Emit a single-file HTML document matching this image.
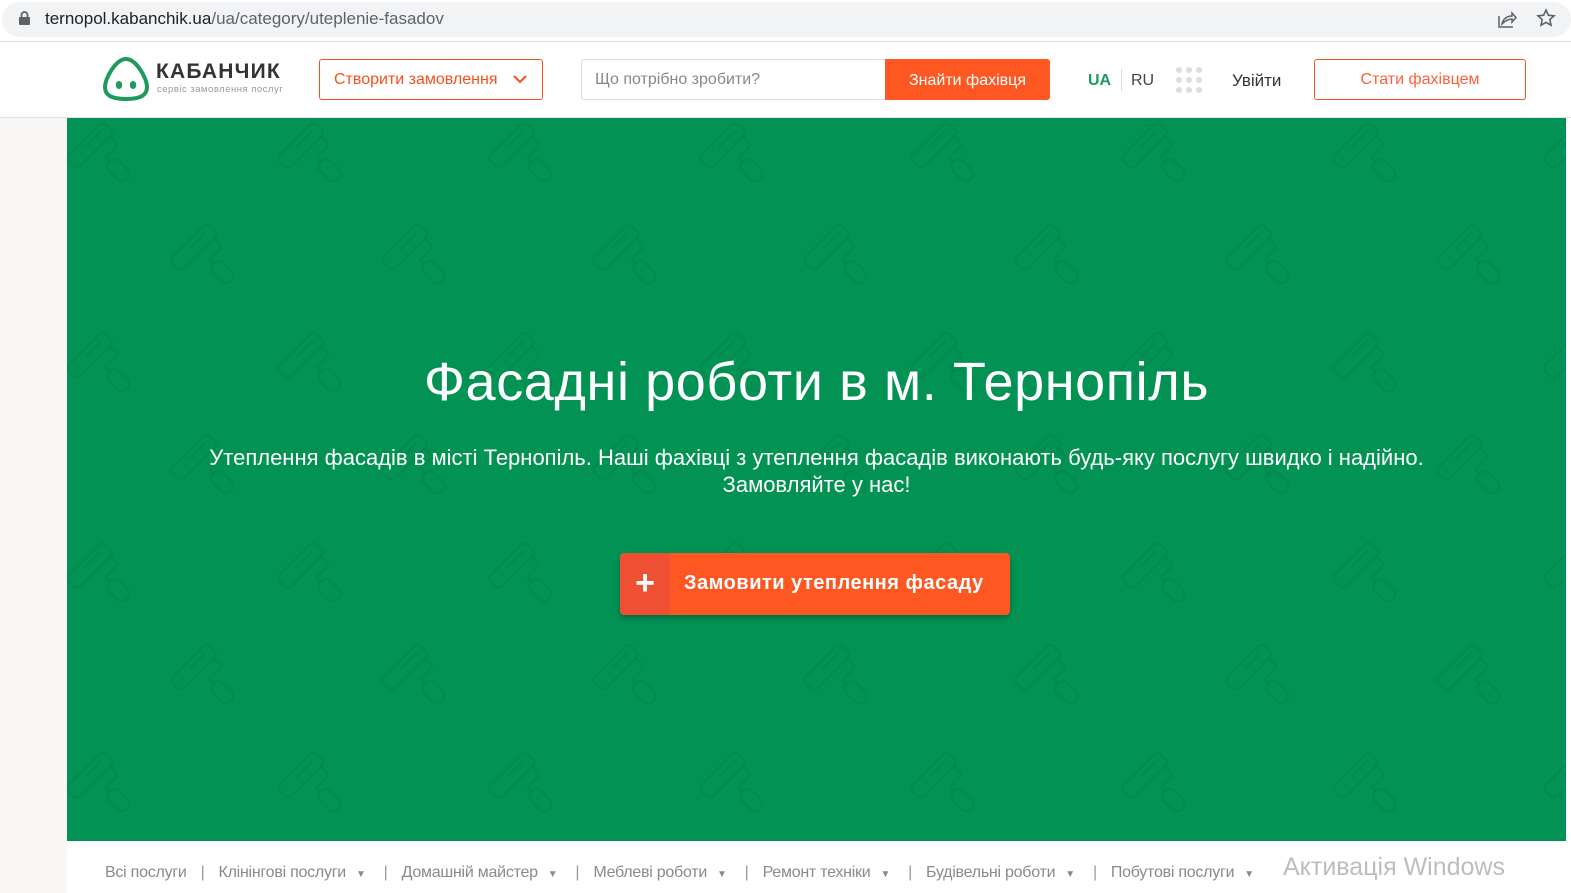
<!DOCTYPE html>
<html><head><meta charset="utf-8">
<style>
*{margin:0;padding:0;box-sizing:border-box}
body{width:1571px;height:893px;overflow:hidden;background:#fff;font-family:"Liberation Sans","DejaVu Sans",sans-serif;position:relative}
.abs{position:absolute}
#bar{left:0;top:0;width:1571px;height:41px;background:#fff}
#pill{left:2px;top:2px;width:1569px;height:35px;background:#f1f3f4;border-radius:18px}
#url{left:45px;top:9px;font-size:17px;color:#202124}
#url span{color:#5f6368}
#hdr{left:0;top:41px;width:1571px;height:77px;background:#fff;border-top:1px solid #dadce0;border-bottom:1px solid #e2e2e2}
.btnO{border:1px solid #f4511e;border-radius:3px;color:#f4511e;font-size:16px;display:flex;align-items:center}
#green{left:67px;top:118px;width:1499px;height:723px;background:#029254;overflow:hidden}
#left{left:0;top:118px;width:67px;height:775px;background:#f8f7f6}
h1{position:absolute;left:0;width:100%;top:233px;text-align:center;color:#fff;font-weight:normal;font-size:54px;letter-spacing:0.6px}
.sub{position:absolute;left:0;width:100%;text-align:center;color:#fff;font-size:22px;line-height:27px;white-space:nowrap}
#cta{left:620px;top:553px;width:390px;height:62px;background:#fe5722;border-radius:4px;box-shadow:0 3px 6px rgba(0,0,0,.25);overflow:hidden}
#nav{left:105px;top:864px;font-size:16px;color:#8a8a8a;white-space:nowrap;letter-spacing:-0.25px}
#nav i{font-style:normal;font-size:10px;margin:0 4px 0 10px}
#nav b{font-weight:normal;margin:0 14px;color:#999}
</style></head><body>
<div class="abs" id="bar"></div>
<div class="abs" id="pill"></div>
<svg class="abs" style="left:18px;top:11px" width="13" height="15" viewBox="0 0 13 15"><rect x="1" y="6" width="11" height="8" rx="1" fill="#5f6368"/><path d="M3.5 6V4a3 3 0 0 1 6 0v2" stroke="#5f6368" stroke-width="1.8" fill="none"/></svg>
<div class="abs" id="url">ternopol.kabanchik.ua<span>/ua/category/uteplenie-fasadov</span></div>
<svg class="abs" style="left:1497px;top:9px" width="20" height="20" viewBox="0 0 20 20" fill="none" stroke="#5f6368" stroke-width="1.5"><path d="M2 7v11h14"/><path d="M5 15c1-5 5-8 10-8V4l4 4.5L15 13v-3c-4 0-7 2-10 5z"/></svg>
<svg class="abs" style="left:1536px;top:8px" width="20" height="20" viewBox="0 0 20 20" fill="none" stroke="#5f6368" stroke-width="1.6"><path d="M10 2l2.4 5.2 5.6.6-4.2 3.8 1.2 5.6L10 14.4 5 17.2l1.2-5.6L2 7.8l5.6-.6z"/></svg>

<div class="abs" id="hdr"></div>
<svg class="abs" style="left:102px;top:56px" width="48" height="46" viewBox="0 0 48 46"><path d="M24 3C14 3 3 22 3 31c0 8 6 12 21 12s21-4 21-12C45 22 34 3 24 3z" fill="none" stroke="#1d9a5c" stroke-width="4"/><ellipse cx="17" cy="29" rx="3.2" ry="4" fill="#1d9a5c"/><ellipse cx="31" cy="29" rx="3.2" ry="4" fill="#1d9a5c"/></svg>
<div class="abs" style="left:156px;top:60px;font-size:21px;font-weight:bold;color:#333;letter-spacing:1.2px">КАБАНЧИК</div>
<div class="abs" style="left:157px;top:84px;font-size:9.5px;color:#999;letter-spacing:0.5px">сервіс замовлення послуг</div>
<div class="abs btnO" style="left:319px;top:59px;width:224px;height:41px;padding-left:14px">Створити замовлення
<svg style="margin-left:16px" width="14" height="9" viewBox="0 0 14 9"><path d="M1 1l6 6 6-6" stroke="#f4511e" stroke-width="2" fill="none"/></svg></div>
<div class="abs" style="left:581px;top:59px;width:305px;height:41px;border:1px solid #ddd;border-radius:3px 0 0 3px;color:#888;font-size:16px;padding:11px 0 0 13px">Що потрібно зробити?</div>
<div class="abs" style="left:885px;top:59px;width:165px;height:41px;background:#fe5722;border-radius:0 3px 3px 0;color:#fff;font-size:16px;text-align:center;line-height:43px">Знайти фахівця</div>
<div class="abs" style="left:1088px;top:72px;font-size:16px;font-weight:bold;color:#1d9a5c">UA</div>
<div class="abs" style="left:1121px;top:69px;width:1px;height:22px;background:#ddd"></div>
<div class="abs" style="left:1131px;top:72px;font-size:16px;color:#444">RU</div>
<svg class="abs" style="left:1175px;top:66px" width="28" height="28" viewBox="0 0 28 28" fill="#ddd"><circle cx="4" cy="4" r="3"/><circle cx="14" cy="4" r="3"/><circle cx="24" cy="4" r="3"/><circle cx="4" cy="14" r="3"/><circle cx="14" cy="14" r="3"/><circle cx="24" cy="14" r="3"/><circle cx="4" cy="24" r="3"/><circle cx="14" cy="24" r="3"/><circle cx="24" cy="24" r="3"/></svg>
<div class="abs" style="left:1232px;top:71px;font-size:17px;color:#333">Увійти</div>
<div class="abs btnO" style="left:1314px;top:59px;width:212px;height:41px;justify-content:center;color:#fe5f3a">Стати фахівцем</div>

<div class="abs" id="left"></div>
<div class="abs" id="green">
<svg width="1499" height="723" style="position:absolute;left:0;top:0">
<defs>
<g id="r" fill="none" stroke="rgba(0,40,20,0.08)" stroke-width="2.6" stroke-linecap="round" stroke-linejoin="round">
<g transform="rotate(45) scale(0.9)">
<rect x="-9" y="-30" width="18" height="58" rx="5"/>
<path d="M-2 -20V2"/>
<path d="M9 -24H18Q22 -24 22 -20V-4H28"/>
<rect x="28" y="-12" width="28" height="16" rx="8"/>
</g></g>
<pattern id="p" width="211" height="210" patternUnits="userSpaceOnUse" x="0" y="0">
<use href="#r" x="22" y="28"/>
<use href="#r" x="126" y="130"/>
<use href="#r" x="233" y="28"/>
<use href="#r" x="22" y="238"/>
<use href="#r" x="-85" y="130"/>
<use href="#r" x="126" y="-80"/>
</pattern></defs>
<rect width="1499" height="723" fill="url(#p)"/>
</svg>
<h1>Фасадні роботи в м. Тернопіль</h1>
<div class="sub" style="top:326px">Утеплення фасадів в місті Тернопіль. Наші фахівці з утеплення фасадів виконають будь-яку послугу швидко і надійно.<br>Замовляйте у нас!</div>
</div>
<div class="abs" id="cta"><div style="position:absolute;left:0;top:0;width:50px;height:62px;background:#ef5034;color:#fff;font-size:34px;font-weight:bold;text-align:center;line-height:60px">+</div>
<div style="position:absolute;left:64px;top:19px;color:#fff;font-size:20px;font-weight:bold;letter-spacing:0.5px">Замовити утеплення фасаду</div></div>

<div class="abs" id="nav">Всі послуги<b>|</b>Клінінгові послуги<i>▼</i><b>|</b>Домашній майстер<i>▼</i><b>|</b>Меблеві роботи<i>▼</i><b>|</b>Ремонт техніки<i>▼</i><b>|</b>Будівельні роботи<i>▼</i><b>|</b>Побутові послуги<i>▼</i></div>
<div class="abs" style="left:1283px;top:853px;font-size:25px;color:#bdbdbd;background:transparent">Активація Windows</div>
</body></html>
